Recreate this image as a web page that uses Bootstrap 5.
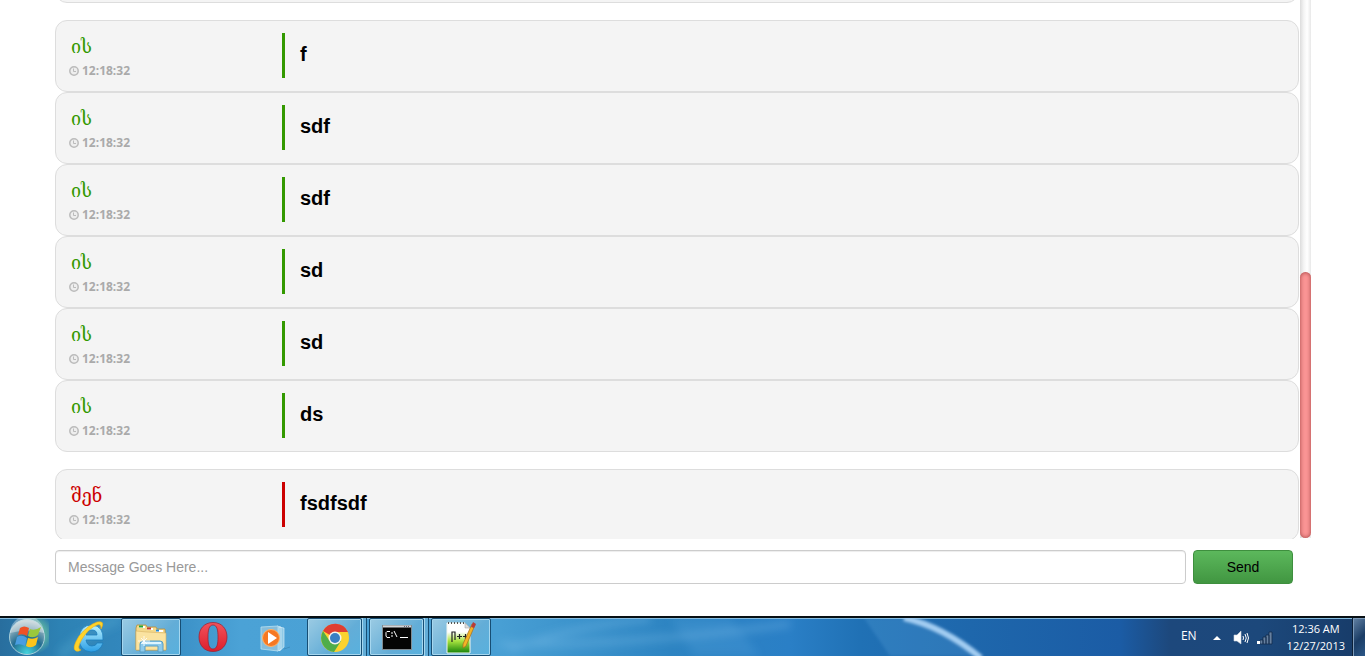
<!DOCTYPE html>
<html lang="ka">
<head>
<meta charset="utf-8">
<meta name="viewport" content="width=device-width, initial-scale=1">
<title>Chat</title>
<link href="https://cdn.jsdelivr.net/npm/bootstrap@5.3.0/dist/css/bootstrap.min.css" rel="stylesheet">
<style>
body{font-family:"Liberation Sans",Arial,sans-serif;font-size:14px;line-height:20px;color:#000;background:#fff}
.chat-area{padding:0 54px 0 55px;min-height:0}
.chat-list{margin-bottom:-2px;gap:17px}
.msg{height:72px;background:#f4f4f4;border:1px solid #ddd;border-radius:12px;padding:12px}
.who{width:214px;padding-top:2px}
.who-name{font-family:"DejaVu Serif","DejaVu Sans",serif;font-size:18px;line-height:24px;padding-left:3px;color:#390}
.when{font-family:"Open Sans",sans-serif;font-weight:700;font-size:12px;line-height:24px;color:#aaa;gap:3px;padding-left:1px}
.said{height:45px;border-left:3px solid #390;padding-left:15px;font-size:20px;font-weight:700;line-height:42px}
.mine .who-name{color:#c00}
.mine .said{border-color:#c00}
.track{width:11px;margin:0 0 1px 1px;background:linear-gradient(90deg,#dcdcdc,#f4f4f4 35%,#fff 65%,#e8e8e8)}
.thumb{border-radius:6px;background:#fa9494;box-shadow:inset 0 0 4px #a04040}
.compose{padding:11px 72px 32px 55px;gap:7px}
.compose .form-control{height:34px;padding:6px 12px;font-size:14px;line-height:20px;border-color:#ccc;border-radius:4px;box-shadow:inset 0 1px 1px rgba(0,0,0,.075)}
.compose .form-control::placeholder{color:#999}
.btn-send{width:100px;height:34px;padding:0;font-size:14px;color:#000;border:1px solid #3e8f3e;border-radius:4px;background:linear-gradient(#5cb85c,#419641)}
.taskbar{height:40px;gap:2px;overflow:hidden;border-top:2px solid #081014;box-shadow:inset 0 1px #86bde0;
background:linear-gradient(90deg,#286e9e 0,#2d82b4 60px,#3489c0 150px,#4ba2d6 240px,#489fd4 500px,#2d84c2 670px,#2a7fc6 790px,#2071b5 860px,#1e67ac 970px,#1b5ca5 1120px,#1d487c 1170px,#1c487b 1260px,#173b68)}
.glow{inset:0;width:100%;height:100%;pointer-events:none}
.task{width:60px;height:38px;background:none;border:0;padding:0;position:relative}
.task svg{display:block;margin:auto}
.start{width:57px}
.open{border:1px solid #174e74;box-shadow:inset 0 0 0 1px #a6d7ef;border-radius:2px;background:linear-gradient(135deg,#9bcbe3,#63add7 60%,#58b1de)}
.stack{width:55px;margin-right:5px}
.stack::after{content:"";position:absolute;top:-1px;bottom:-1px;right:-6px;width:5px;background:#63add7;border-left:1px solid #a6d7ef;border-right:1px solid #174e74}
.tray{font-family:"Open Sans",sans-serif;font-size:12px;line-height:17px;color:#fff;position:relative}
.tray button{background:none;border:0;padding:0;color:#fff}
.clock-text{font-size:11px;margin-left:14px}
.lang{padding-bottom:4px!important;margin-right:16px}
.peek{width:13px;height:38px;margin-left:7px;border-left:1px solid #0c2038!important;box-shadow:inset 1px 1px #7c9ab9;background:linear-gradient(135deg,#6483a5,#1b3d66 55%,#2b5787)!important}
</style>
</head>
<body class="vh-100 d-flex flex-column overflow-hidden">
<svg width="0" height="0" class="position-absolute" aria-hidden="true"><defs>
<symbol id="clock" viewBox="0 0 10 10"><circle cx="5" cy="5" r="4.200" fill="#eee" stroke="#bbb" stroke-width="1.500"/><path d="M4.500 2.500V5.500H7" fill="none" stroke="#bbb"/></symbol>
</defs></svg>

<main class="chat-area d-flex flex-grow-1 overflow-hidden">
  <div class="flex-grow-1 d-flex flex-column justify-content-end">
    <div class="chat-list d-flex flex-column">
      <div class="msg"></div>
      <div>
        <article class="msg d-flex"><div class="who"><div class="who-name">ის</div><div class="when d-flex align-items-center"><svg width="10" height="10"><use href="#clock"/></svg><time>12:18:32</time></div></div><div class="said">f</div></article>
        <article class="msg d-flex"><div class="who"><div class="who-name">ის</div><div class="when d-flex align-items-center"><svg width="10" height="10"><use href="#clock"/></svg><time>12:18:32</time></div></div><div class="said">sdf</div></article>
        <article class="msg d-flex"><div class="who"><div class="who-name">ის</div><div class="when d-flex align-items-center"><svg width="10" height="10"><use href="#clock"/></svg><time>12:18:32</time></div></div><div class="said">sdf</div></article>
        <article class="msg d-flex"><div class="who"><div class="who-name">ის</div><div class="when d-flex align-items-center"><svg width="10" height="10"><use href="#clock"/></svg><time>12:18:32</time></div></div><div class="said">sd</div></article>
        <article class="msg d-flex"><div class="who"><div class="who-name">ის</div><div class="when d-flex align-items-center"><svg width="10" height="10"><use href="#clock"/></svg><time>12:18:32</time></div></div><div class="said">sd</div></article>
        <article class="msg d-flex"><div class="who"><div class="who-name">ის</div><div class="when d-flex align-items-center"><svg width="10" height="10"><use href="#clock"/></svg><time>12:18:32</time></div></div><div class="said">ds</div></article>
      </div>
      <article class="msg mine d-flex"><div class="who"><div class="who-name">შენ</div><div class="when d-flex align-items-center"><svg width="10" height="10"><use href="#clock"/></svg><time>12:18:32</time></div></div><div class="said">fsdfsdf</div></article>
    </div>
  </div>
  <div class="track d-flex flex-column justify-content-end"><div class="thumb" style="height:49.4%"></div></div>
</main>

<form class="compose d-flex">
  <input class="form-control" type="text" placeholder="Message Goes Here..." aria-label="Message">
  <button class="btn btn-send flex-shrink-0" type="button">Send</button>
</form>

<footer class="taskbar d-flex flex-shrink-0 position-relative">
  <svg class="glow position-absolute" viewBox="0 0 1365 38" preserveAspectRatio="none" aria-hidden="true">
    <defs><filter id="soft" x="-20%" y="-50%" width="140%" height="200%"><feGaussianBlur stdDeviation="1.6"/></filter>
    <filter id="softer" x="-20%" y="-50%" width="140%" height="200%"><feGaussianBlur stdDeviation="4"/></filter></defs>
    <g filter="url(#softer)">
      <path d="M510 32Q570 8 650 1M500 26Q630 28 790 6" fill="none" stroke="#8cc8ee" stroke-opacity=".3" stroke-width="6"/>
      <path d="M670 0H730L760 38H695Z" fill="#77bdf0" fill-opacity=".14"/>
      <path d="M60 38Q80 18 120 0" fill="none" stroke="#61b2d8" stroke-opacity=".3" stroke-width="10"/>
    </g>
    <g filter="url(#soft)">
      <path d="M864 0H906Q952 14 975 38H890Z" fill="#77bdf0" fill-opacity=".18"/>
      <path d="M904 0Q942 8 981 40" fill="none" stroke="#a3cdf2" stroke-width="6"/>
    </g>
  </svg>

  <button class="task start" aria-label="Start"><svg width="40" height="38" viewBox="0 0 40 38">
    <defs><radialGradient id="orb" cx=".5" cy=".95" r=".9"><stop offset="0" stop-color="#43d3dc"/><stop offset=".5" stop-color="#236d91"/><stop offset="1" stop-color="#b6c8cf"/></radialGradient>
    <radialGradient id="halo"><stop offset=".6" stop-color="#7ed89b" stop-opacity=".5"/><stop offset="1" stop-color="#7ed89b" stop-opacity="0"/></radialGradient></defs>
    <circle cx="25" cy="16" r="20" fill="url(#halo)"/>
    <circle cx="18" cy="19" r="17.500" fill="url(#orb)" stroke="#a6ced9"/>
    <path d="M1 15A17 17 0 0 1 35 15Q19 10 1 15Z" fill="#fff" opacity=".35"/>
    <path d="M11 10Q15 7 20 10L18 18Q14 15 9 17Z" fill="#ee5126"/><path d="M21 11Q26 13 32 9L29 17Q24 21 19 18Z" fill="#9ac83c"/><path d="M8 19Q13 16 18 20L16 28Q11 25 6 27Z" fill="#4a9de0"/><path d="M19 20Q24 22 29 19L27 27Q22 31 17 28Z" fill="#fcc41b"/></svg></button>

  <button class="task" aria-label="Internet Explorer"><svg width="36" height="38" viewBox="0 0 36 38">
    <defs><linearGradient id="ie" x2="0" y2="1"><stop stop-color="#baf2ff"/><stop offset="1" stop-color="#2a9ee6"/></linearGradient></defs>
    <path d="M32 22H15Q16 28 21 28Q25 28 26 25H32Q29 34 20 34Q8 33 8 20Q9 7 21 7Q33 8 32 22ZM15 17H26Q26 12 21 12Q16 12 15 17Z" fill="url(#ie)" stroke="#1c7ebd" stroke-width=".8"/>
    <path d="M30 11Q35 2 26 4Q17 7 8 18Q0 31 5 33Q7 34 10 32Q5 31 11 21Q18 10 26 7Q30 5 30 11Z" fill="#ffd329" stroke="#e9ad17" stroke-width=".6"/></svg></button>

  <button class="task open" aria-label="Windows Explorer"><svg width="34" height="36" viewBox="0 0 34 36">
    <path d="M2 9L3 6H12L13 8H22L23 10H31L32 31H2Z" fill="#f4d98b" stroke="#b68d3c" stroke-width=".8"/>
    <path d="M5 8H11M13 10H19M22 12H29" stroke="#fff" stroke-width="2"/><path d="M5 7.500H9" stroke="#20a537" stroke-width="2"/><path d="M13 9.500H17" stroke="#c33b2d" stroke-width="2"/><path d="M22 11.500H25" stroke="#2589d3" stroke-width="2"/>
    <path d="M2 12L13 13L32 14V31H2Z" fill="#fae3a0" stroke="#d6b263" stroke-width=".6"/>
    <path d="M6 33V25Q6 22 9 22H26Q29 22 29 25V33H24V27H11V33Z" fill="#8ccaec" stroke="#569ec5"/><path d="M8 24H27" stroke="#ddf5ff" stroke-width="2"/><path d="M10 17V27M4 22H16M7 19L13 25M13 19L7 25" stroke="#fff" stroke-width=".8"/></svg></button>

  <button class="task" aria-label="Opera"><svg width="32" height="38" viewBox="0 0 32 38">
    <defs><linearGradient id="op" x2="0" y2="1"><stop stop-color="#f2525b"/><stop offset="1" stop-color="#dc1f2d"/></linearGradient></defs>
    <path fill-rule="evenodd" d="M16 4.500C7 4.500 2 11 2 19S7 33.500 16 33.500S30 27 30 19S25 4.500 16 4.500ZM16 7C20 7 21 12 21 19S20 31 16 31S11 26 11 19S12 7 16 7Z" fill="url(#op)" stroke="#9e1c2c" stroke-width=".7"/></svg></button>

  <button class="task" aria-label="Media Player"><svg width="32" height="38" viewBox="0 0 32 38">
    <path d="M20 9L25 10V29L20 33ZM18 8L22 9V32L18 33Z" fill="#8fc9e6" stroke="#e0f3fb" stroke-width=".6"/><path d="M2 9L19 8V33L2 31Z" fill="#86bddb" stroke="#b6e0f1" stroke-width=".8"/><path d="M25 31L31 29" stroke="#347da7" opacity=".5"/>
    <circle cx="12" cy="20" r="8.500" fill="#f67822" stroke="#ffb366"/><path d="M9 14L18 20L9 26Z" fill="#fff"/></svg></button>

  <button class="task open stack" aria-label="Chrome"><svg width="30" height="36" viewBox="0 0 30 36">
    <circle cx="15" cy="19" r="14" fill="#fbd22f"/><path d="M15 19L3 12A14 14 0 0 1 28 13H15Z" fill="#df3e32"/><path d="M3 12A14 14 0 0 0 14 33L21 22L9 21Z" fill="#4fad4a"/><circle cx="15" cy="19" r="6.500" fill="#f5f5ef"/><circle cx="15" cy="19" r="5" fill="#397fc4"/></svg></button>

  <button class="task open stack" aria-label="Command Prompt"><svg width="30" height="36" viewBox="0 0 30 36">
    <rect x=".5" y="6.500" width="29" height="24" fill="#050505" stroke="#818b91"/><path d="M1 7.500H29" stroke="#d3d7da" stroke-width="2"/><path d="M22 7.500H28" stroke="#667" stroke-dasharray="1 1"/>
    <path d="M8 12.500H5L4 13.500V17L5 18.500H8M10 13V15M10 16V18M12 12L15 18M18 18.500H26" fill="none" stroke="#fff"/></svg></button>

  <button class="task open" aria-label="Notepad++"><svg width="32" height="36" viewBox="0 0 32 36">
    <defs><linearGradient id="np" x2="0" y2="1"><stop offset=".3" stop-color="#fff"/><stop offset=".6" stop-color="#a8e33f"/><stop offset=".95" stop-color="#278e10"/></linearGradient></defs>
    <path d="M2 4H20L25 9V34H2Z" fill="url(#np)" stroke="#f2f5ee"/><path d="M3 4H20" stroke="#555" stroke-width="2" stroke-dasharray="1 2"/><path d="M20 4V9H25Z" fill="#ddd" stroke="#999" stroke-width=".5"/>
    <path d="M7 23V13H10V21M12 17.500H17M14.500 15V20M18 17.500H23M20.500 15V20" fill="none" stroke="#222" stroke-width="1.200"/>
    <path d="M27 5L30 6L21 27L18 29V25Z" fill="#f4b326" stroke="#a46c20" stroke-width=".7"/><path d="M28 3L31 5L29 9L26 8Z" fill="#b83b3a"/></svg></button>

  <div class="tray ms-auto d-flex align-items-center">
    <button class="lang" aria-label="Language">EN</button>
    <button aria-label="Show hidden icons"><svg width="8" height="20" viewBox="0 0 8 20"><path d="M0 13L4 9L8 13Z" fill="#fff"/></svg></button>
    <button class="ms-2 ps-1" aria-label="Volume"><svg width="16" height="20" viewBox="0 0 16 20"><path d="M1 8H4L8 4V17L4 14H1Z" fill="#fff" stroke="#ccd5df" stroke-width=".6"/><path d="M10 9Q11 11 10 13M12 7Q14.500 11 12 15M14 6Q17 11 14 16" fill="none" stroke="#fff"/></svg></button>
    <button class="ms-2" aria-label="Network"><svg width="16" height="20" viewBox="0 0 16 20"><g fill="#66809f" stroke="#122c4b" stroke-width=".8"><path d="M3 13H6V17H3ZM6 10H9V17H6ZM9 8H12V17H9ZM12 5H15V17H12Z"/></g><path d="M0 14H3V17H0Z" fill="#fff"/></svg></button>
    <div class="clock-text text-center"><div>12:36 AM</div><div>12/27/2013</div></div>
    <button class="peek" aria-label="Show desktop"></button>
  </div>
</footer>
<script src="https://cdn.jsdelivr.net/npm/bootstrap@5.3.0/dist/js/bootstrap.bundle.min.js"></script>
</body>
</html>
